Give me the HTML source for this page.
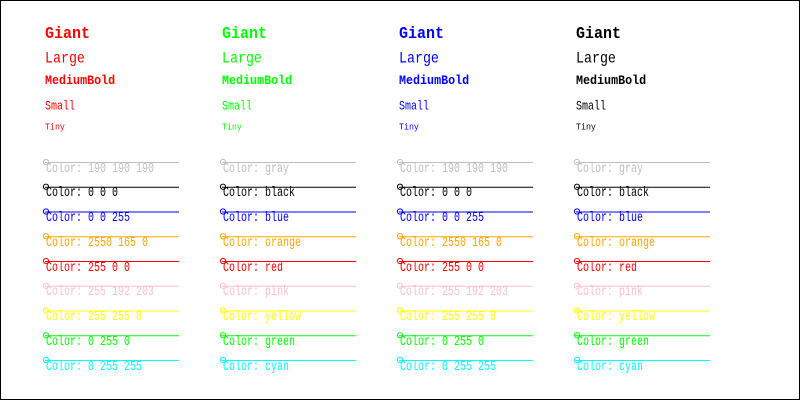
<!DOCTYPE html>
<html><head><style>
body{margin:0;background:#fff}
#f{position:relative;width:798px;height:398px;border:1px solid #000;overflow:hidden;font-family:"Liberation Mono",monospace}
.t{position:absolute;white-space:pre;line-height:1;transform-origin:0 0}
.g{font-size:15px;font-weight:bold;top:25px;transform:scaleY(1.1)}
.l{font-size:13.3px;top:49.5px;transform:scaleY(1.15)}
.m{font-size:11.7px;font-weight:bold;top:74px;transform:scaleY(1.1)}
.s{font-size:10px;top:100.5px;transform:scaleY(1.25)}
.y{font-size:8.3px;top:123px;transform:scaleY(1.1)}
.c{font-size:10px;transform:scaleY(1.35)}
svg{position:absolute;left:0;top:0}
</style></head><body><div id="f">
<svg width="798" height="398" fill="none" stroke-width="1">
<g id="rows"></g>
</svg>
<div class="t g" style="left:44px;color:#f00">Giant</div><div class="t l" style="left:44px;color:#f00">Large</div><div class="t m" style="left:44px;color:#f00">MediumBold</div><div class="t s" style="left:44px;color:#f00">Small</div><div class="t y" style="left:44px;color:#f00">Tiny</div>
<div class="t g" style="left:221px;color:#0f0">Giant</div><div class="t l" style="left:221px;color:#0f0">Large</div><div class="t m" style="left:221px;color:#0f0">MediumBold</div><div class="t s" style="left:221px;color:#0f0">Small</div><div class="t y" style="left:221px;color:#0f0">Tiny</div>
<div class="t g" style="left:398px;color:#00f">Giant</div><div class="t l" style="left:398px;color:#00f">Large</div><div class="t m" style="left:398px;color:#00f">MediumBold</div><div class="t s" style="left:398px;color:#00f">Small</div><div class="t y" style="left:398px;color:#00f">Tiny</div>
<div class="t g" style="left:575px;color:#000">Giant</div><div class="t l" style="left:575px;color:#000">Large</div><div class="t m" style="left:575px;color:#000">MediumBold</div><div class="t s" style="left:575px;color:#000">Small</div><div class="t y" style="left:575px;color:#000">Tiny</div>
<div id="labels"></div>
</div>
<script>
var cols=[["rgb(190,190,190)","190 190 190","gray"],["#000","0 0 0","black"],["#00f","0 0 255","blue"],["rgb(255,165,0)","2550 165 0","orange"],["#f00","255 0 0","red"],["rgb(255,192,203)","255 192 203","pink"],["#ff0","255 255 0","yellow"],["#0f0","0 255 0","green"],["#0ff","0 255 255","cyan"]];
var xs=[44,221,398,575],svg="",html="";
for(var c=0;c<4;c++)for(var i=0;i<9;i++){
 var y=161.5+i*24.75,x=xs[c],col=cols[i][0];
 svg+='<line x1="'+x+'" y1="'+y+'" x2="'+(x+134)+'" y2="'+y+'" stroke="'+col+'"/><circle cx="'+(x+1)+'" cy="'+(y-0.5)+'" r="2.6" stroke="'+col+'"/>';
 html+='<div class="t c" style="left:'+(x+1)+'px;top:'+(y+1)+'px;color:'+col+'">Color: '+(c%2==0?cols[i][1]:cols[i][2])+'</div>';
}
document.getElementById("rows").innerHTML=svg;
document.getElementById("labels").innerHTML=html;
</script>
</body></html>
